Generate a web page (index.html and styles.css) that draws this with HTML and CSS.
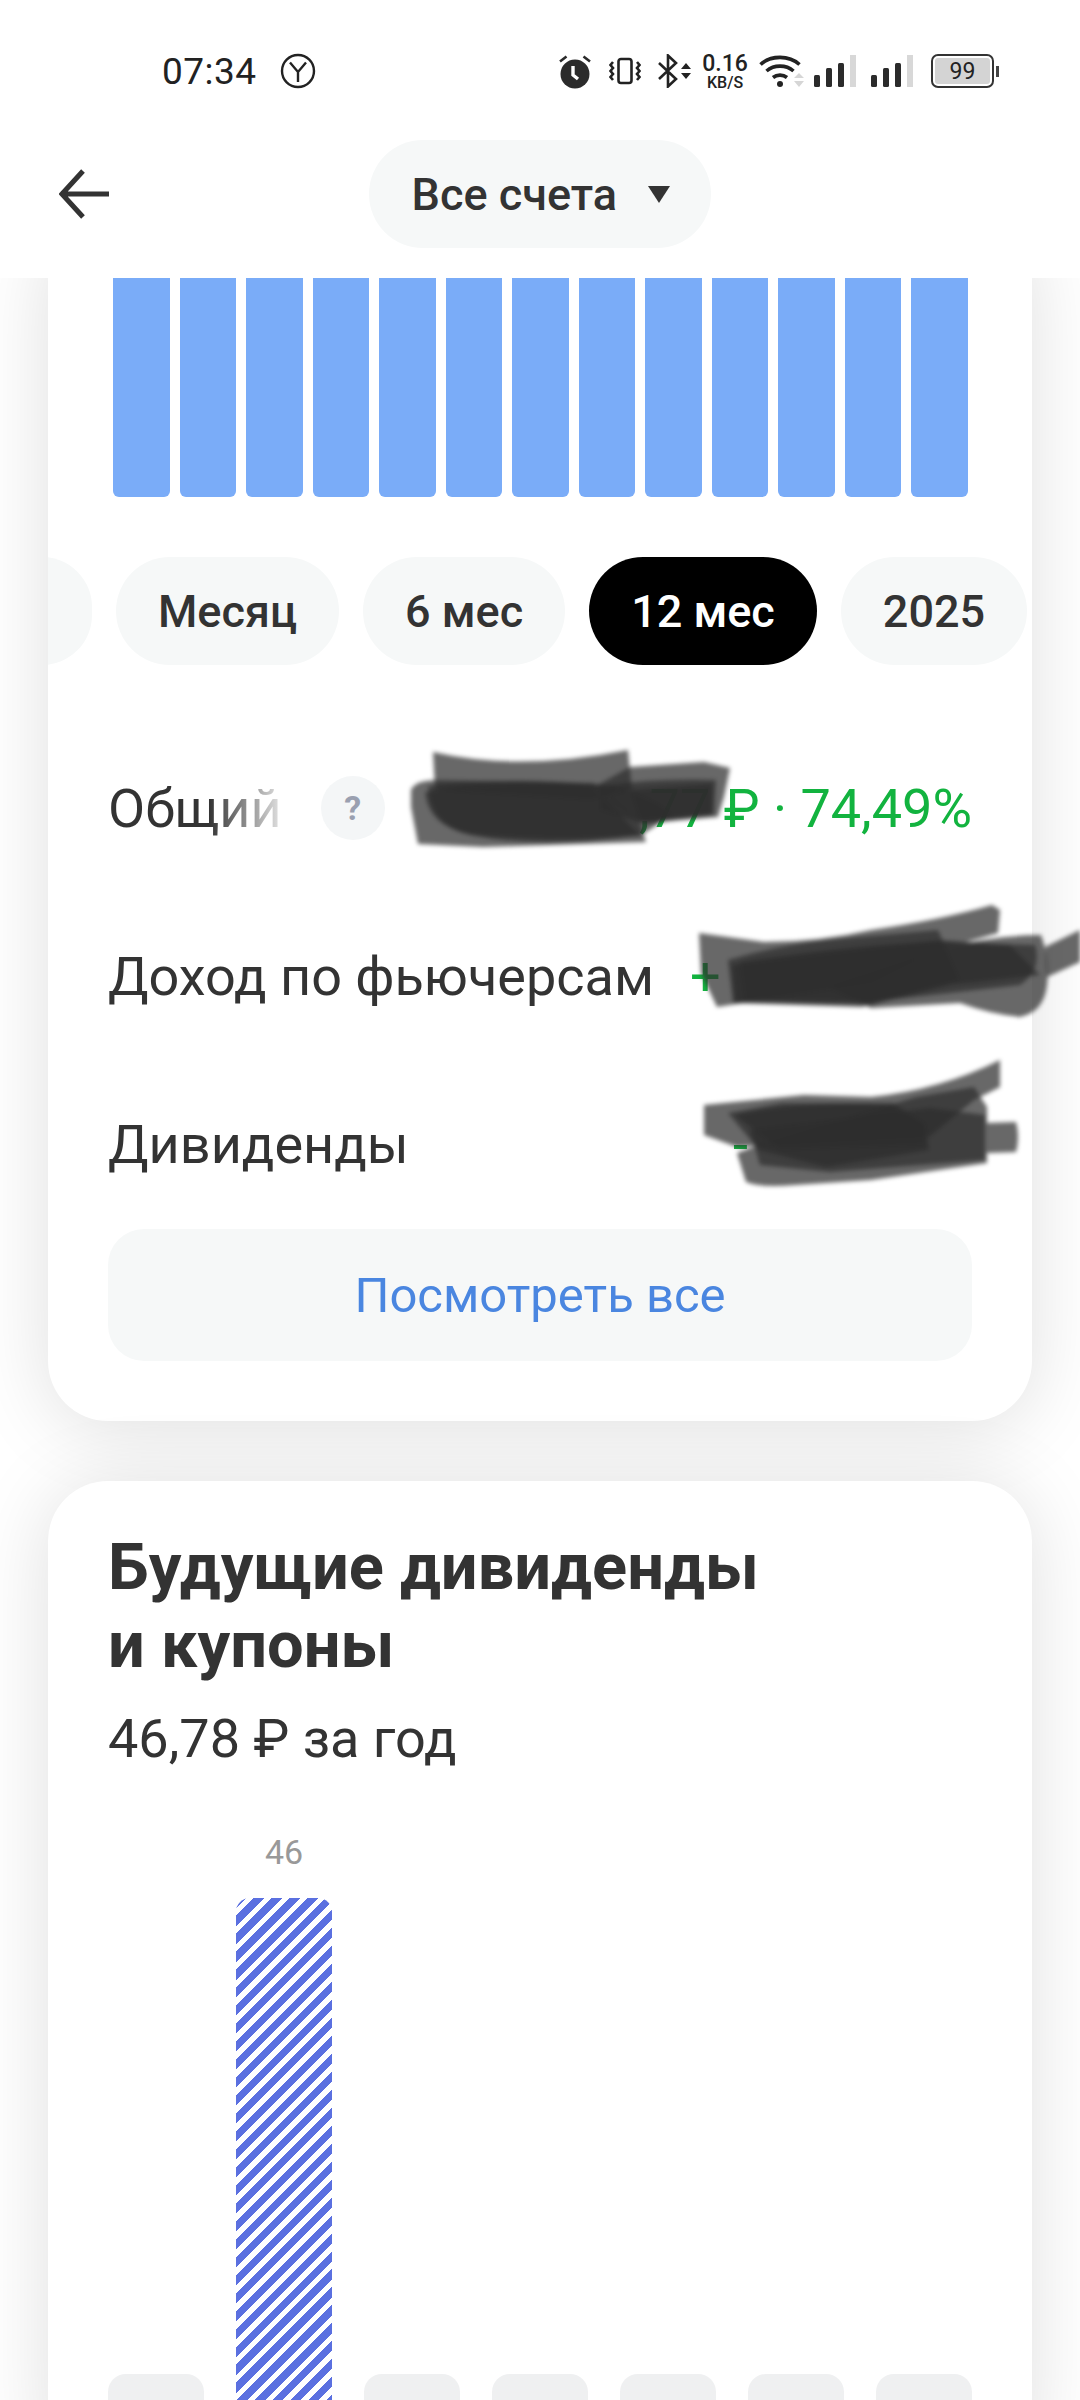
FILE: index.html
```html
<!DOCTYPE html>
<html lang="ru">
<head>
<meta charset="utf-8">
<meta name="viewport" content="width=device-width, initial-scale=1">
<title>Все счета</title>
<link rel="stylesheet" href="styles.css">
</head>
<body>
<div class="page">

  <!-- Top: status bar and account switcher -->
  <header class="top">
    <div class="status">
      <div class="status-left">
        <span class="clock">07:34</span>
        <svg class="ic-y" width="36" height="36" viewBox="0 0 36 36" fill="none" stroke="#222" stroke-width="2.4">
          <circle cx="18" cy="18" r="16"/>
          <path d="M10 9.5 18 19l8-9.5M18 19v10"/>
        </svg>
      </div>
      <div class="status-right">
        <svg class="ic-alarm" width="32" height="35" viewBox="0 0 32 35">
          <circle cx="16" cy="20" r="14.5" fill="#2b2b2b"/>
          <path d="M1 7.5 7.5 2.5M31 7.5 24.5 2.5" stroke="#2b2b2b" stroke-width="2.6" fill="none"/>
          <path d="M14 12v9l5 4" stroke="#fff" stroke-width="3.4" fill="none"/>
        </svg>
        <svg class="ic-vibrate" width="32" height="28" viewBox="0 0 32 28" fill="none" stroke="#222" stroke-width="2.6">
          <rect x="9.5" y="2" width="13" height="24" rx="2.5"/>
          <path d="M4 5 1.500 8 4 11 1.500 14 4 17 1.500 20 4 23M28 5l2.500 3L28 11l2.500 3L28 17l2.500 3L28 23"/>
        </svg>
        <svg class="ic-bt" width="34" height="34" viewBox="0 0 34 34">
          <path d="M2 9 19 25l-8 7.500V1.500L19 9 2 25" fill="none" stroke="#222" stroke-width="2.6"/>
          <path d="M24 15l5-6 5 6zM24 19h10l-5 6z" fill="#222"/>
        </svg>
        <div class="speed"><span class="speed-num">0.16</span><span class="speed-unit">KB/S</span></div>
        <svg class="ic-wifi" width="46" height="34" viewBox="0 0 46 34">
          <g fill="none" stroke="#222" stroke-width="3.6">
            <path d="M1.500 10.500C12 1 30 1 40.500 10.500"/>
            <path d="M7.500 17C15 10.500 27 10.500 34.500 17"/>
            <path d="M14 23.500c4-3.200 10-3.200 14 0"/>
          </g>
          <circle cx="21" cy="30" r="3" fill="#222"/>
          <path d="M35 24l5-5 5 5zM35 27h10l-5 6z" fill="#d6d6d6"/>
        </svg>
        <svg class="ic-signal" width="43" height="32" viewBox="0 0 43 32">
          <rect x="0" y="20" width="6" height="12" rx="1.500" fill="#2b2b2b"/>
          <rect x="12" y="13" width="6" height="19" rx="1.500" fill="#2b2b2b"/>
          <rect x="24" y="8" width="6" height="24" rx="1.500" fill="#2b2b2b"/>
          <rect x="36" y="0" width="6" height="32" fill="#d8d8d8"/>
        </svg>
        <svg class="ic-signal ic-signal-2" width="43" height="32" viewBox="0 0 43 32">
          <rect x="0" y="20" width="6" height="12" rx="1.500" fill="#2b2b2b"/>
          <rect x="12" y="13" width="6" height="19" rx="1.500" fill="#2b2b2b"/>
          <rect x="24" y="8" width="6" height="24" rx="1.500" fill="#2b2b2b"/>
          <rect x="36" y="0" width="6" height="32" fill="#d8d8d8"/>
        </svg>
        <div class="battery"><div class="battery-body"><span>99</span></div><div class="battery-cap"></div></div>
      </div>
    </div>
    <nav class="nav">
      <svg class="back" width="50" height="50" viewBox="0 0 50 50" fill="none" stroke="#333" stroke-width="5">
        <path d="M24 2 3 25l21 23M3 25h47"/>
      </svg>
      <div class="account">
        <span>Все счета</span>
        <svg width="22" height="17" viewBox="0 0 22 17"><path d="M0 0h22L11 17z" fill="#333"/></svg>
      </div>
    </nav>
  </header>

  <main class="feed">
    <section class="card card-income">
      <div class="bars">
        <div class="bar"></div><div class="bar"></div><div class="bar"></div><div class="bar"></div>
        <div class="bar"></div><div class="bar"></div><div class="bar"></div><div class="bar"></div>
        <div class="bar"></div><div class="bar"></div><div class="bar"></div><div class="bar"></div>
        <div class="bar"></div>
      </div>

      <div class="periods">
        <div class="pill pill-cut"></div>
        <div class="pill">Месяц</div>
        <div class="pill">6 мес</div>
        <div class="pill pill-on">12 мес</div>
        <div class="pill">2025</div>
      </div>

      <div class="rows">
        <div class="row">
          <span class="row-name row-name-fade">Общий</span>
          <span class="help">?</span>
          <span class="row-val row-val-total">,77 ₽ · 74,49%</span>
        </div>
        <div class="row">
          <span class="row-name">Доход по фьючерсам</span>
          <span class="row-val row-val-futures">+</span>
        </div>
        <div class="row">
          <span class="row-name">Дивиденды</span>
          <span class="row-val row-val-divs">-</span>
        </div>
      </div>

      <div class="see-all">Посмотреть все</div>
    </section>

    <section class="card card-future">
      <h2 class="future-title">Будущие дивиденды<br>и купоны</h2>
      <div class="future-sum">46,78 ₽ за год</div>
      <div class="forecast">
        <div class="col"><div class="stub"></div></div>
        <div class="col"><span class="col-label">46</span><div class="stripes"></div></div>
        <div class="col"><div class="stub"></div></div>
        <div class="col"><div class="stub"></div></div>
        <div class="col"><div class="stub"></div></div>
        <div class="col"><div class="stub"></div></div>
        <div class="col"><div class="stub"></div></div>
      </div>
    </section>
  </main>

  <!-- marker scribbles over the amounts -->
  <svg class="scribble" width="1080" height="2400" viewBox="0 0 1080 2400">
    <g fill="#2e2e2e" fill-opacity=".72">
      <!-- first row -->
      <path d="M433 752Q520 772 628 750L632 790 590 800 435 790Z"/>
      <path d="M411 790Q415 780 438 780L594 783 639 820 646 842 483 847 418 844 411 807Z"/>
      <path d="M630 767 704 762 730 768 724 797 718 817 643 823 594 787Z"/>
      <path d="M600 786Q660 778 716 780L714 815 645 824 600 810Z"/>
      <path d="M428 786Q520 776 590 785L640 835Q540 850 470 835 430 826 428 786Z"/>
      <path d="M425 792Q520 780 610 785 660 800 672 815L640 836Q540 842 470 834 428 826 425 792Z"/>
      <path d="M630 790 712 784 712 814 640 820Z"/>

      <!-- second row -->
      <path d="M699 933 764 942Q820 942 871 930 940 920 992 905L1000 910 998 933 938 950 871 983 717 1007 701 973Z"/>
      <path d="M728 960Q780 945 826 940L938 930 960 980 862 1007 733 1003Z"/>
      <path d="M938 950Q990 935 1041 935 1050 960 1047 985 1044 1012 1020 1017 990 1014 960 1003L871 1008 826 987Z"/>
      <path d="M1045 947 1080 930 1080 962 1047 977Z"/>
      <path d="M732 965 940 940 1010 945 1040 975 950 985 870 1005 735 1002Z"/>
      <path d="M740 962Q850 945 930 942L1035 945Q1042 970 1020 985L870 1002 745 1000Z"/>

      <!-- third row -->
      <path d="M704 1105 804 1095 871 1097Q940 1090 1000 1060L1000 1087 974 1100 929 1137 737 1147 704 1135Z"/>
      <path d="M728 1113 782 1103 893 1103 925 1123 929 1150 826 1167 759 1150Z"/>
      <path d="M916 1097 974 1087 987 1107 987 1163 871 1180 795 1185Q760 1188 746 1182L737 1153 764 1143Z"/>
      <path d="M987 1123 1016 1122Q1020 1137 1016 1152L987 1153Z"/>
      <path d="M735 1115Q800 1100 890 1105L925 1125 925 1145 780 1150Z"/>
      <path d="M750 1130 930 1108 985 1115 985 1160 830 1172 760 1165Z"/>
    </g>
  </svg>
</div>
</body>
</html>
```
FILE: styles.css
```css
html, body {
  margin: 0;
  padding: 0;
}
body {
  font-family: Roboto, "Noto Sans", sans-serif;
  color: #333;
  background: #fff;
}
.page {
  position: relative;
  width: 1080px;
  height: 2400px;
  overflow: hidden;
  background: #fff;
}

/* top */
.top {
  position: relative;
  z-index: 2;
  height: 278px;
  background: #fff;
}
.status {
  display: flex;
  justify-content: space-between;
  align-items: center;
  height: 52px;
  padding: 45px 81px 0 162px;
}
.status-left {
  display: flex;
  align-items: center;
  gap: 23px;
}
.clock {
  font-size: 37px;
  color: #222;
  letter-spacing: 0.5px;
}
.status-right {
  display: flex;
  align-items: center;
}
.ic-vibrate {
  margin-left: 18px;
}
.ic-bt {
  margin-left: 16px;
}
.speed {
  display: flex;
  flex-direction: column;
  align-items: center;
  margin-left: 13px;
  width: 42px;
  color: #222;
  line-height: 1;
}
.speed-num {
  font-size: 23px;
  font-weight: 500;
}
.speed-unit {
  font-size: 16px;
  font-weight: 500;
}
.ic-wifi {
  margin-left: 13px;
}
.ic-signal {
  margin-left: 9px;
}
.ic-signal-2 {
  margin-left: 14px;
}
.battery {
  display: flex;
  align-items: center;
  gap: 2px;
  margin-left: 17px;
}
.battery-body {
  display: flex;
  align-items: center;
  justify-content: center;
  width: 55px;
  height: 26px;
  border: 2px solid #333;
  border-radius: 7px;
  background: linear-gradient(#d4d4d4, #d4d4d4) content-box;
  padding: 2px;
  font-size: 23px;
  color: #222;
}
.battery-cap {
  width: 3px;
  height: 11px;
  background: #444;
}
.nav {
  display: flex;
  position: relative;
  justify-content: center;
  margin-top: 43px;
}
.back {
  position: absolute;
  left: 59px;
  top: 29px;
}
.account {
  display: flex;
  align-items: center;
  gap: 31px;
  box-sizing: border-box;
  width: 342px;
  height: 108px;
  padding-left: 43px;
  margin-left: -1px;
  border-radius: 54px;
  background: #f6f8f8;
  font-size: 45px;
  font-weight: 500;
  color: #333;
}

/* cards */
.feed {
  padding: 0 48px;
}
.card {
  background: #fff;
  border-radius: 60px;
  box-shadow: 0 6px 80px rgba(0, 0, 0, .13);
}
.card-income {
  margin-top: -60px;
  padding: 60px 0 60px;
}
.card-future {
  margin-top: 60px;
  padding: 47px 60px 0;
}

.bars {
  display: flex;
  gap: 10px;
  height: 219px;
  padding: 0 64px 0 65px;
}
.bar {
  flex: 1;
  background: #7aacf8;
  border-radius: 0 0 6px 6px;
}

.periods {
  display: flex;
  gap: 24px;
  margin-top: 60px;
  overflow: hidden;
}
.pill {
  flex: none;
  display: flex;
  align-items: center;
  height: 108px;
  padding: 0 42px;
  border-radius: 54px;
  background: #f6f8f8;
  font-size: 45px;
  font-weight: 500;
  color: #333;
}
/* previous period, scrolled almost out of the card */
.pill-cut {
  width: 100px;
  padding: 0;
  margin-left: -56px;
}
.pill-on {
  background: #000;
  color: #fff;
}

.rows {
  margin-top: 59px;
  padding: 0 60px;
}
.row {
  display: flex;
  align-items: center;
  height: 168px;
  font-size: 54px;
}
.row-name {
  white-space: nowrap;
}
.row-name-fade {
  background: linear-gradient(90deg, #333 58%, #e4e4e4 100%);
  -webkit-background-clip: text;
  background-clip: text;
  color: transparent;
}
.help {
  display: flex;
  align-items: center;
  justify-content: center;
  width: 64px;
  height: 64px;
  margin-left: 39px;
  border-radius: 50%;
  background: #f4f6f7;
  color: #9aa0b0;
  font-size: 34px;
  font-weight: 700;
}
.row-val {
  margin-left: auto;
  color: #12b33f;
  white-space: nowrap;
}
.row-val-futures {
  width: 282px;
}
.row-val-divs {
  width: 239px;
}

.see-all {
  display: flex;
  align-items: center;
  justify-content: center;
  height: 132px;
  margin: 1px 60px 0;
  border-radius: 36px;
  background: #f6f8f8;
  color: #4a86e0;
  font-size: 49px;
}

.future-title {
  margin: 0;
  font-size: 65px;
  line-height: 78px;
  font-weight: 700;
  color: #333;
}
.future-sum {
  margin-top: 21px;
  font-size: 54px;
  line-height: 68px;
}
.forecast {
  display: flex;
  align-items: flex-end;
  gap: 32px;
  height: 700px;
}
.col {
  display: flex;
  flex-direction: column;
  align-items: center;
  width: 96px;
}
.col-label {
  font-size: 34px;
  line-height: 40px;
  margin-bottom: 26px;
  color: #999;
}
.stub {
  width: 96px;
  height: 99px;
  border-radius: 18px 18px 0 0;
  background: #eff0f1;
}
.stripes {
  width: 96px;
  height: 575px;
  border-radius: 14px 14px 0 0;
  background: repeating-linear-gradient(135deg, #5b70e0 0 7.200px, #fff 7.200px 12.700px);
}

.scribble {
  position: absolute;
  left: 0;
  top: 0;
  z-index: 1;
  pointer-events: none;
  filter: blur(2px);
}
```
